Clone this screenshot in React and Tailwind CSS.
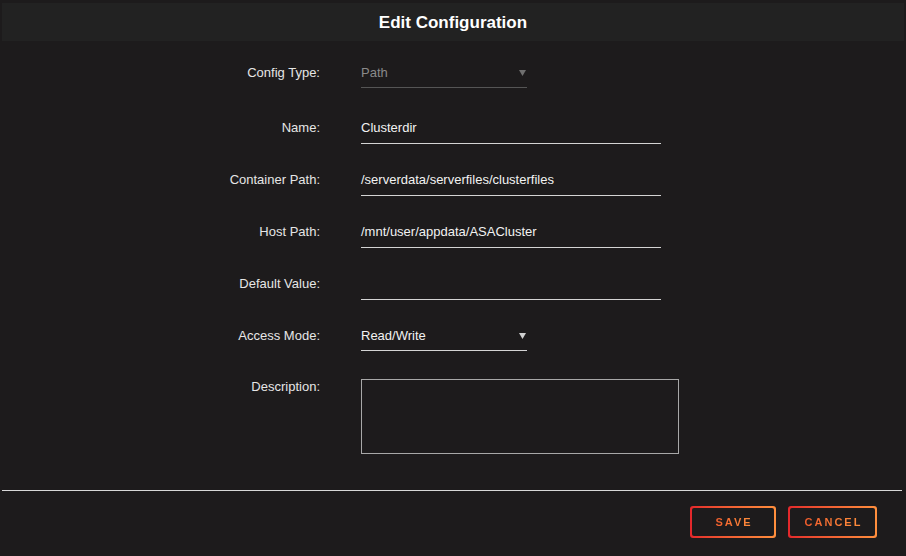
import React from "react";

const Caret = ({ color }) => (
  <svg width="7" height="6" viewBox="0 0 7 6" className="shrink-0">
    <path d="M0 0 H7 L3.5 6 Z" fill={color} />
  </svg>
);

const TextRow = ({ label, value, first }) => (
  <div className={`flex items-start ${first ? "mt-[30px]" : "mt-[26px]"}`}>
    <div className="w-[320px] text-right text-[13px] leading-[20px] text-[#e6e6e6]">
      {label}
    </div>
    <div className="ml-[41px] w-[300px] border-b border-[#d4d4d4] pb-[5px] text-[13px] leading-[20px] text-[#f2f2f2]">
      {value || "\u00a0"}
    </div>
  </div>
);

const GradientButton = ({ children, width }) => (
  <div
    className={`rounded-[3px] bg-gradient-to-r from-[#e3262b] to-[#ff8f3d] p-[2px] ${width}`}
  >
    <div className="flex h-[28px] items-center justify-center rounded-[2px] bg-[#1d1b1c]">
      <span className="bg-gradient-to-r from-[#f15a2b] to-[#ff8f3d] bg-clip-text pl-[2px] text-[11px] font-bold tracking-[2px] text-transparent">
        {children}
      </span>
    </div>
  </div>
);

const App = () => {
  return (
    <div
      className="w-[906px] h-[556px] overflow-hidden bg-[#1d1b1c]"
      style={{ fontFamily: '"Liberation Sans", Arial, sans-serif' }}
    >
      <div className="mx-[2px] mt-[3px] flex h-[38px] items-center justify-center bg-[#222222] pt-[1px]">
        <h1 className="text-[17px] font-bold text-white">Edit Configuration</h1>
      </div>

      {/* Config type (disabled select) */}
      <div className="flex items-start mt-[22px]">
        <div className="w-[320px] text-right text-[13px] leading-[20px] text-[#e6e6e6]">
          Config Type:
        </div>
        <div className="ml-[41px] flex w-[166px] items-center justify-between border-b border-[#555555] pb-[4px] pr-[1px] text-[13px] leading-[20px] text-[#8a8a8a]">
          <span>Path</span>
          <Caret color="#6f6f6f" />
        </div>
      </div>

      <TextRow first label="Name:" value="Clusterdir" />
      <TextRow label="Container Path:" value="/serverdata/serverfiles/clusterfiles" />
      <TextRow label="Host Path:" value="/mnt/user/appdata/ASACluster" />
      <TextRow label="Default Value:" value="" />

      {/* Access mode */}
      <div className="flex items-start mt-[26px]">
        <div className="w-[320px] text-right text-[13px] leading-[20px] text-[#e6e6e6]">
          Access Mode:
        </div>
        <div className="ml-[41px] flex w-[166px] items-center justify-between border-b border-[#d4d4d4] pb-[4px] pr-[1px] text-[13px] leading-[20px] text-[#f2f2f2]">
          <span>Read/Write</span>
          <Caret color="#d0d0d0" />
        </div>
      </div>

      {/* Description */}
      <div className="flex items-start mt-[26px]">
        <div className="w-[320px] text-right text-[13px] leading-[20px] text-[#e6e6e6]">
          Description:
        </div>
        <textarea className="ml-[41px] mt-[2px] h-[75px] w-[318px] resize-none border border-[#a8a8a8] bg-transparent outline-none" />
      </div>

      <div className="ml-[2px] mr-[4px] mt-[36px] h-px bg-[#d8d8d8]" />

      <div className="mt-[15px] flex justify-end gap-[12px] pr-[29px]">
        <GradientButton width="w-[86px]">SAVE</GradientButton>
        <GradientButton width="w-[89px]">CANCEL</GradientButton>
      </div>
    </div>
  );
};

export default App;
